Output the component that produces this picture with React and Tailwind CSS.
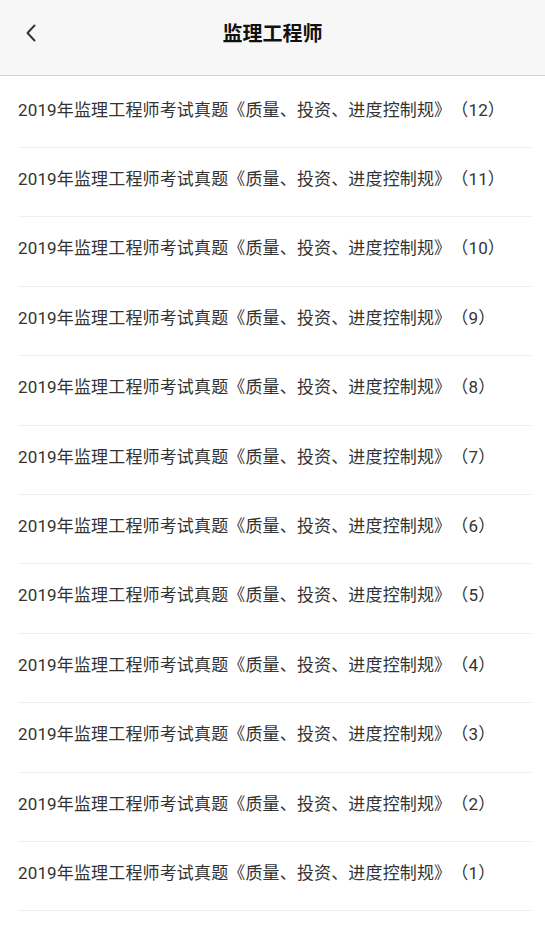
import React from "react";

const items = [12, 11, 10, 9, 8, 7, 6, 5, 4, 3, 2, 1];

export default function App() {
  return (
    <div
      className="min-h-screen bg-white [text-spacing-trim:space-all]"
      style={{ fontFamily: 'Roboto, "Noto Sans CJK SC", sans-serif' }}
    >
      {/* Header */}
      <div className="relative flex h-[76px] items-center justify-center border-b border-[#d2d2d2] bg-[#f7f7f7]">
        <button className="absolute left-[22px] top-[21px] flex h-[24px] w-[18px] items-center justify-center">
          <svg width="12" height="18" viewBox="0 0 12 18" fill="none">
            <path d="M9.5 1.5L2.5 9l7 7.5" stroke="#333" strokeWidth="1.9" strokeLinecap="round" strokeLinejoin="round" />
          </svg>
        </button>
        <h1 className="mb-[8px] text-[20px] font-bold text-[#111]">监理工程师</h1>
      </div>

      {/* List */}
      <ul className="pt-[2.6px]">
        {items.map((n) => (
          <li
            key={n}
            className="ml-[18px] mr-[13px] h-[69.4px] border-b border-[#efefef] pt-[19px] text-[17px] leading-[24px] tracking-[0.15px] text-[#333] [text-spacing-trim:space-all]"
          >
            2019年监理工程师考试真题《质量、投资、进度控制规》（{n}）
          </li>
        ))}
      </ul>
    </div>
  );
}
